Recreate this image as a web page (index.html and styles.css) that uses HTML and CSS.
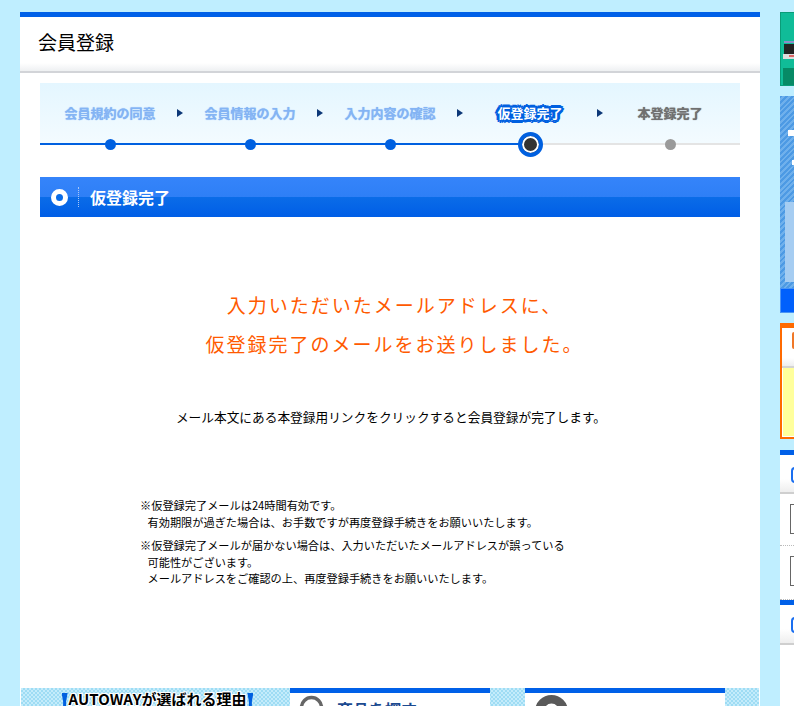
FILE: index.html
```html
<!DOCTYPE html>
<html lang="ja">
<head>
<meta charset="utf-8">
<title>会員登録</title>
<link rel="stylesheet" href="styles.css">
</head>
<body>
<div class="page">
  <main class="main">
    <h1 class="page-title">会員登録</h1>
    <div class="content">
      <ol class="steps">
        <li class="step done"><span class="step-label">会員規約の同意</span><i class="dot"></i></li>
        <li class="step done"><span class="step-label">会員情報の入力</span><i class="dot"></i></li>
        <li class="step done"><span class="step-label">入力内容の確認</span><i class="dot"></i></li>
        <li class="step current"><span class="step-label">仮登録完了</span><i class="dot"></i></li>
        <li class="step todo"><span class="step-label">本登録完了</span><i class="dot"></i></li>
      </ol>
      <h2 class="section-bar"><i class="ring"></i><span class="section-text">仮登録完了</span></h2>
      <p class="lead">入力いただいたメールアドレスに、<br>仮登録完了のメールをお送りしました。</p>
      <p class="body-text">メール本文にある本登録用リンクをクリックすると会員登録が完了します。</p>
      <ul class="notes">
        <li>※仮登録完了メールは24時間有効です。<br>&nbsp;&nbsp;&nbsp;有効期限が過ぎた場合は、お手数ですが再度登録手続きをお願いいたします。</li>
        <li>※仮登録完了メールが届かない場合は、入力いただいたメールアドレスが誤っている<br>&nbsp;&nbsp;&nbsp;可能性がございます。<br>&nbsp;&nbsp;&nbsp;メールアドレスをご確認の上、再度登録手続きをお願いいたします。</li>
      </ul>
    </div>
    <div class="bottom">
      <div class="reason"><span class="reason-title">AUTOWAYが選ばれる理由</span></div>
      <div class="bottom-card card-a"><svg class="lens" viewBox="0 0 25 25"><circle cx="12.5" cy="12.5" r="10" fill="none" stroke="#666" stroke-width="3.5"/></svg><span class="card-title">商品を探す</span></div>
      <div class="bottom-gap"></div>
      <div class="bottom-card card-b"><svg class="tire" viewBox="0 0 33 33"><circle cx="16.5" cy="16.5" r="12.2" fill="none" stroke="#5a5a5a" stroke-width="8.6"/></svg></div>
      <div class="bottom-end"></div>
    </div>
  </main>
  <aside class="side">
    <div class="promo">
      <svg class="car" viewBox="0 0 14 20"><rect x="1" y="0" width="13" height="2" fill="#8c8cc8"/><rect x="1" y="3" width="13" height="12" fill="#222"/><rect x="0" y="13" width="14" height="5" fill="#ddd"/><rect x="6" y="14" width="8" height="2" fill="#d66"/></svg>
      <div class="promo-foot"></div>
    </div>
    <div class="hatch">
      <div class="hatch-mark"></div>
      <div class="hatch-mark-small"></div>
      <div class="hatch-panel"></div>
    </div>
    <div class="hatch-btn"></div>
    <div class="orange">
      <div class="orange-head"><i class="orange-icon"></i></div>
      <div class="orange-body"></div>
    </div>
    <div class="side-card">
      <div class="side-head"><i class="side-icon"></i></div>
      <div class="side-row"><i class="thumb"></i></div>
      <div class="side-row last"><i class="thumb"></i></div>
    </div>
    <div class="side-card tail">
      <div class="side-head"><i class="side-icon"></i></div>
    </div>
  </aside>
</div>
</body>
</html>
```
FILE: styles.css
```css
* { box-sizing: border-box; }
html, body { margin: 0; padding: 0; height: 706px; overflow: hidden; background: #bfeeff; }
body { font-family: "Noto Sans CJK JP", "Liberation Sans", sans-serif; color: #000; }
i { display: block; }
.page { display: flex; gap: 20px; padding: 12px 0 0 20px; width: 794px; height: 706px; overflow: hidden; }

.main { width: 740px; height: 694px; background: #fff; border-top: 5px solid #0060e8; display: flex; flex-direction: column; flex: none; }
.page-title { margin: 0; height: 56px; padding: 10px 0 0 18px; font-size: 19px; line-height: 30px; font-weight: 400; border-bottom: 2px solid #d2d4d8; background: linear-gradient(#fff 46px, #eef0f2 54px); }
.content { padding: 10px 20px 0; flex: 1; display: flex; flex-direction: column; }

.steps { list-style: none; margin: 0; padding: 0; height: 72px; display: flex; background: linear-gradient(#e4f6ff, #f3fbff 60px, #fff 60px); }
.step { width: 140px; position: relative; text-align: center; }
.step-label { display: inline-block; margin-top: 20px; font-size: 13px; line-height: 20px; font-weight: 700; color: #84b4f4; text-shadow: 0 0 1px #84b4f4; }
.step::before { content: ""; position: absolute; left: 0; right: 0; top: 60px; height: 2px; background: #0060e0; }
.step::after { content: ""; position: absolute; right: -3px; top: 26px; border-left: 6px solid #0c3878; border-top: 4px solid transparent; border-bottom: 4px solid transparent; }
.step:last-child::after { display: none; }
.dot { position: absolute; left: 65px; top: 56px; width: 11px; height: 11px; border-radius: 50%; background: #0060e0; }
.current .step-label { color: #fff; margin-top: 20px; font-size: 13px; text-shadow: 3px 0 0 #0060e0, -3px 0 0 #0060e0, 0 3px 0 #0060e0, 0 -3px 0 #0060e0, 2px 2px 0 #0060e0, -2px 2px 0 #0060e0, 2px -2px 0 #0060e0, -2px -2px 0 #0060e0, 1px 0 0 #0060e0, -1px 0 0 #0060e0, 0 1px 0 #0060e0, 0 -1px 0 #0060e0; }
.current::before { right: 70px; }
.current .dot { left: 58px; top: 49px; width: 25px; height: 25px; background: #333; border: 4px solid #0060e0; box-shadow: inset 0 0 0 2px #fff; }
.step.todo::before { background: #e4e4e4; }
.current { background: linear-gradient(#e4e4e4, #e4e4e4) 70px 60px / 70px 2px no-repeat; }
.todo .step-label { color: #707070; text-shadow: 0 0 1px #707070; }
.todo .dot { background: #9a9a9a; }

.section-bar { margin: 22px 0 0; height: 40px; display: flex; align-items: center; background: linear-gradient(#3584fa, #2e7ff6 20px, #0a6ce8 20px, #005ee6); color: #fff; font-size: 16px; font-weight: 700; }
.ring { width: 17px; height: 17px; border-radius: 50%; border: 5px solid #fff; background: #0a6ce8; margin-left: 11px; }
.section-text { margin-left: 10px; padding-left: 11px; border-left: 1px dotted #a8c8f8; line-height: 20px; }

.lead { margin: 68px 0 0; padding-left: 9px; text-align: center; font-size: 19px; line-height: 39px; letter-spacing: 2px; color: #ff5a00; }
.body-text { margin: 44px 0 0; padding-left: 2px; text-align: center; font-size: 12.7px; line-height: 20px; }
.notes { list-style: none; margin: 70px 0 0; padding: 0 0 0 100px; font-size: 11.2px; line-height: 16.5px; }
.notes li { margin-bottom: 7px; }

.bottom { display: flex; height: 18px; overflow: hidden; flex: none; padding: 0 1px; background: repeating-conic-gradient(#9edcf4 0 25%, #c4ecfb 0 50%) 0 0 / 4px 4px content-box; }
.reason { width: 269px; padding-left: 4px; text-align: center; font-size: 15px; font-weight: 700; flex: none; }
.reason-title { display: inline-block; position: relative; padding: 0 1px; line-height: 20px; height: 18px; margin-top: 1px; text-shadow: 1px 0 0 #fff, -1px 0 0 #fff, 0 1px 0 #fff, 0 -1px 0 #fff, 1px 1px 0 #fff, -1px -1px 0 #fff, 1px -1px 0 #fff, -1px 1px 0 #fff; }
.reason-title::before, .reason-title::after { content: ""; position: absolute; top: 4px; width: 6px; height: 14px; background: #0060e0; clip-path: polygon(0 0, 100% 0, 75% 60%, 75% 100%, 25% 100%, 25% 60%); }
.reason-title::before { left: -6px; }
.reason-title::after { right: -6px; }
.bottom-card { width: 200px; flex: none; background: #fff; border-top: 5px solid #0060e8; display: flex; align-items: flex-start; gap: 13px; padding-left: 9px; overflow: hidden; }
.card-b { width: 200px; padding-left: 10px; }
.bottom-gap { width: 35px; flex: none; }
.bottom-end { flex: 1; }
.lens { width: 25px; height: 25px; flex: none; margin-top: 2px; }
.tire { width: 33px; height: 33px; flex: none; margin-top: 2px; }
.card-title { font-size: 16px; font-weight: 700; color: #1c4a90; line-height: 32px; height: 13px; margin-top: 0; }

.side { width: 200px; flex: none; display: flex; flex-direction: column; }
.promo { height: 74px; background: #10bc98; border: 1px solid #0a9c78; position: relative; flex: none; }
.car { position: absolute; left: 2px; top: 28px; width: 14px; height: 20px; }
.promo-foot { position: absolute; left: 2px; right: 0; bottom: 0; height: 17px; background: #078a66; }
.hatch { margin-top: 10px; height: 192px; flex: none; position: relative; background: repeating-linear-gradient(135deg, #4d9ae4 0 2px, #6fb0ec 2px 4px); }
.hatch-mark { position: absolute; left: 8px; top: 28px; width: 20px; height: 20px; background: #fff; clip-path: polygon(30% 0, 70% 0, 70% 30%, 100% 30%, 100% 60%, 70% 60%, 70% 100%, 30% 100%, 30% 60%, 0 60%, 0 30%, 30% 30%); }
.hatch-mark-small { position: absolute; left: 12px; top: 64px; width: 6px; height: 5px; background: #fff; }
.hatch-panel { position: absolute; left: 5px; right: 0; top: 106px; bottom: 6px; background: #a6cdf2; }
.hatch-btn { height: 25px; flex: none; background: #0060fc; border: 1px solid #4a94f4; }
.orange { margin-top: 10px; height: 116px; flex: none; border: 2px solid #ff6a00; border-top-width: 5px; background: #fff; }
.orange-head { height: 40px; border-bottom: 2px solid #d4d4d4; background: linear-gradient(#fff 30px, #eee); padding: 4px 0 0 10px; }
.orange-icon { width: 4px; height: 17px; background: #f07828; border-radius: 2px 0 0 2px; }
.orange-body { height: 69px; background: #ffff9c; border: 1px solid #fff; border-width: 0 0 1px 1px; }
.side-card { margin-top: 11px; flex: none; background: #fff; border-top: 5px solid #0060e8; }
.side-card + .side-card { margin-top: 0; }
.side-card.tail { flex: 1; }
.side-head { height: 39px; border-bottom: 2px solid #cfcfcf; background: linear-gradient(#fff 24px, #eee); padding: 12px 0 0 11px; }
.tail .side-head { height: 40px; padding-top: 12px; }
.side-icon { width: 20px; height: 16px; border: 2px solid #1a6ef0; border-radius: 4px; background: #fff; }
.side-row { height: 52px; padding: 10px 0 0 10px; border-bottom: 1px dotted #bbb; }
.side-row.last { height: 54px; padding-top: 10px; }
.thumb { width: 20px; height: 30px; border: 1px solid #666; border-width: 1px 0 1px 1px; background: #fff; }
```
